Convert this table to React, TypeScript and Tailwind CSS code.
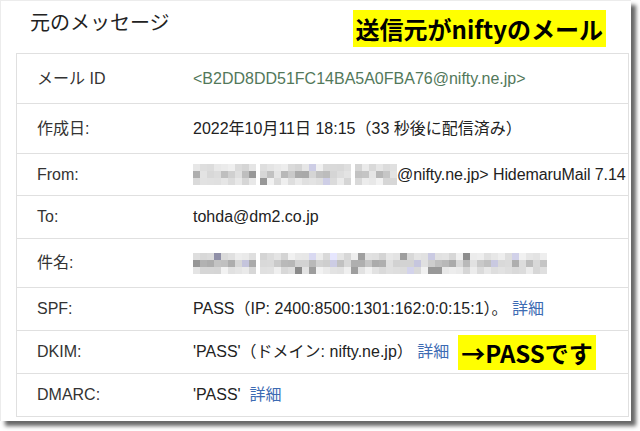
import React from 'react';

// 元のメッセージ画面（Gmail のヘッダー表示）のキャプチャ再現

const SANS = "font-['Liberation_Sans','Noto_Sans_CJK_JP',sans-serif]";
const BOLD_JP = "font-['Noto_Sans_CJK_JP',sans-serif] font-bold";

// モザイク用のグレーを疑似乱数で作る
const makeCells = (seed: number, cols: number) => {
  let s = seed;
  const rand = () => {
    s = (s * 9301 + 49297) % 233280;
    return s / 233280;
  };
  const out: string[] = [];
  for (let c = 0; c < cols; c++) {
    for (let r = 0; r < 3; r++) {
      const middle = r === 1;
      let v = middle ? 168 + Math.round(rand() * 62) : 212 + Math.round(rand() * 30);
      if (rand() > 0.95) v = 135 + Math.round(rand() * 35);
      const blue = rand() > 0.94 ? 12 : 0;
      out.push(`rgb(${v - blue},${v - blue},${v + blue})`);
    }
  }
  return out;
};

const Mosaic = ({ segs, seed }: { segs: number[]; seed: number }) => (
  <span className="inline-flex gap-[4px] align-middle">
    {segs.map((cols, i) => (
      <span key={i} className="grid grid-flow-col grid-rows-[repeat(3,7px)] auto-cols-[7px]">
        {makeCells(seed + i * 17, cols).map((bg, j) => (
          <span key={j} style={{ backgroundColor: bg }} />
        ))}
      </span>
    ))}
  </span>
);

const Detail = () => <span className="text-[#3d6bb3]">詳細</span>;

interface Row {
  label: string;
  h: string;
  value: React.ReactNode;
}

const rows: Row[] = [
  {
    label: 'メール ID',
    h: 'h-[49px]',
    value: <span className="text-[#52785a]">&lt;B2DD8DD51FC14BA5A0FBA76@nifty.ne.jp&gt;</span>,
  },
  { label: '作成日:', h: 'h-[50px]', value: '2022年10月11日 18:15（33 秒後に配信済み）' },
  {
    label: 'From:',
    h: 'h-[42px]',
    value: (
      <span className="flex items-center whitespace-nowrap">
        <Mosaic segs={[9, 13, 6]} seed={11} />
        <span className="tracking-[-0.1px]">@nifty.ne.jp&gt; HidemaruMail 7.14</span>
      </span>
    ),
  },
  { label: 'To:', h: 'h-[43px]', value: 'tohda@dm2.co.jp' },
  { label: '件名:', h: 'h-[49px]', value: <Mosaic segs={[9, 41]} seed={53} /> },
  {
    label: 'SPF:',
    h: 'h-[43px]',
    value: (
      <>
        PASS（IP: 2400:8500:1301:162:0:0:15:1）。 <Detail />
      </>
    ),
  },
  {
    label: 'DKIM:',
    h: 'h-[43px]',
    value: (
      <span className="flex items-center">
        <span>
          'PASS'（ドメイン: nifty.ne.jp） <Detail />
        </span>
        <span className={`ml-[9px] h-[35px] bg-[#ffff00] px-[3px] text-[24px] leading-[35px] text-black ${BOLD_JP}`}>
          →PASSです
        </span>
      </span>
    ),
  },
  {
    label: 'DMARC:',
    h: 'h-[43px]',
    value: (
      <>
        'PASS'&nbsp; <Detail />
      </>
    ),
  },
];

export default function App() {
  return (
    <div className="h-[431px] w-[640px] overflow-hidden bg-white">
      <div
        className={`h-[421px] w-[631px] overflow-hidden border-t border-l border-[#ececec] bg-white text-[#222] shadow-[5px_5px_4px_rgba(0,0,0,0.6)] ${SANS}`}
      >
        {/* タイトル行 */}
        <div className="flex h-[52px] items-start">
          <span className="mt-[10px] pl-[29px] text-[20px] leading-[24px] text-[#222]">元のメッセージ</span>
          <span
            className={`ml-auto mr-[25px] mt-[9px] h-[37px] bg-[#ffff00] px-[3px] text-[24px] leading-[37px] text-black ${BOLD_JP}`}
          >
            送信元がniftyのメール
          </span>
        </div>

        {/* ヘッダー表 */}
        <div className="ml-[15px] w-[613px] border border-[#e0e0e0] text-[16px]">
          {rows.map((r, i) => (
            <div
              key={r.label}
              className={`flex items-center ${r.h} ${i > 0 ? 'border-t border-[#e0e0e0]' : ''}`}
            >
              <span className="w-[176px] shrink-0 pl-[20px] text-[#333]">{r.label}</span>
              <span className="whitespace-nowrap">{r.value}</span>
            </div>
          ))}
        </div>
      </div>
    </div>
  );
}
